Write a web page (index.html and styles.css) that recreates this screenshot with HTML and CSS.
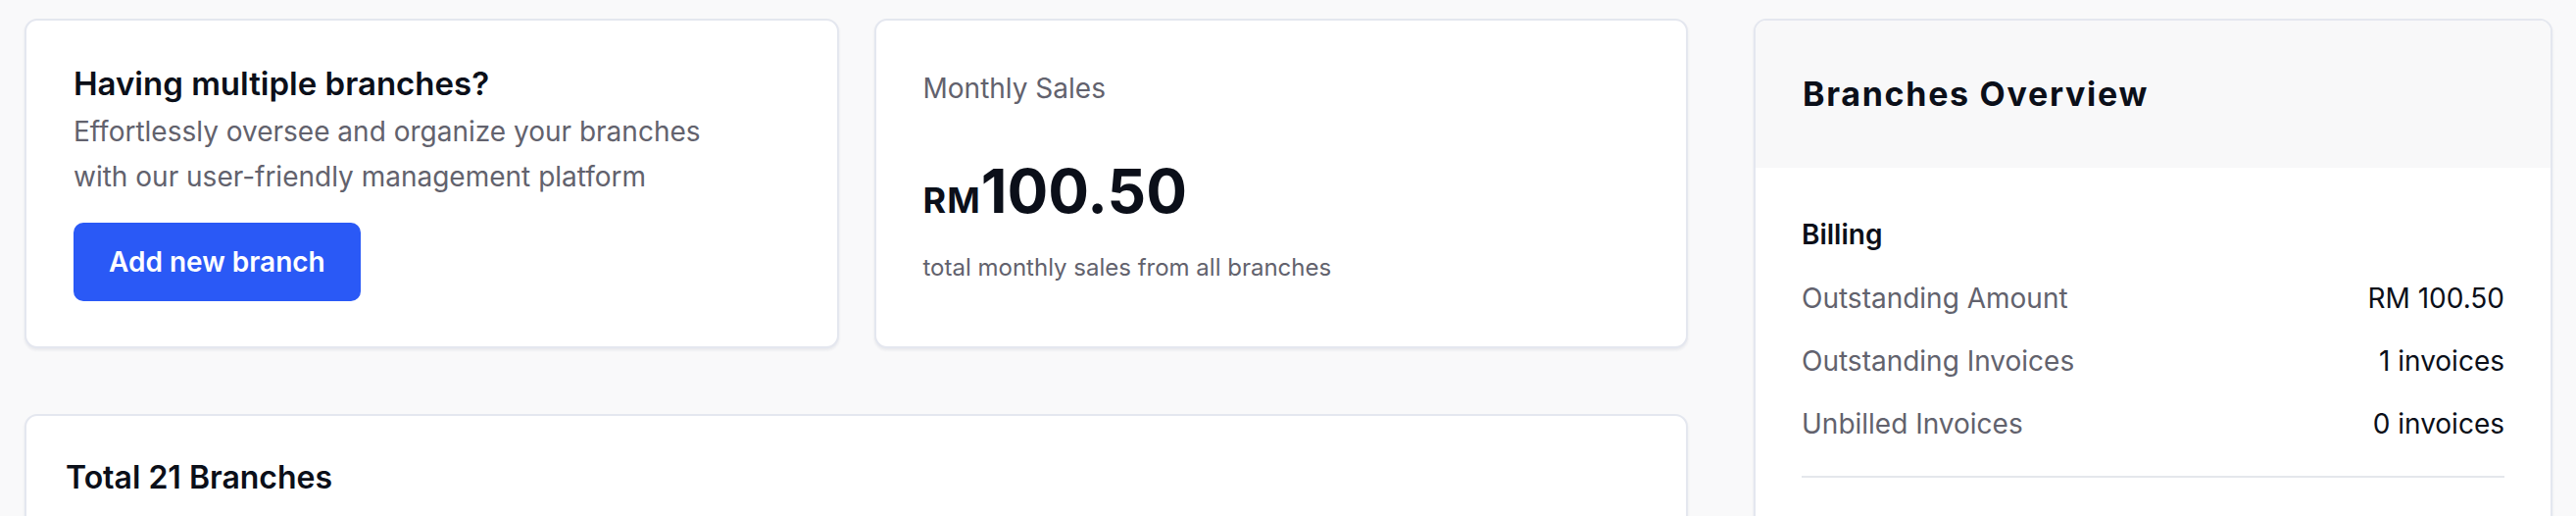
FILE: index.html
```html
<!DOCTYPE html>
<html lang="en">
<head>
    <meta charset="UTF-8">
    <meta name="viewport" content="width=device-width, initial-scale=1.0">
    <title>Branches</title>
    <link rel="stylesheet" href="styles.css">
</head>
<body>
    <div class="layout">
        <div class="main-col">
            <div class="top-cards">
                <!-- Promo card -->
                <div class="card promo">
                    <h2 class="promo-title">Having multiple branches?</h2>
                    <p class="promo-text">
                        Effortlessly oversee and organize your branches<br>
                        with our user-friendly management platform
                    </p>
                    <button type="button" class="btn-primary">Add new branch</button>
                </div>

                <!-- Sales card -->
                <div class="card sales">
                    <div class="sales-label">Monthly Sales</div>
                    <div class="sales-amount"><span class="currency">RM</span>100.50</div>
                    <div class="sales-note">total monthly sales from all branches</div>
                </div>
            </div>

            <div class="card branches">
                <h3 class="branches-title">Total 21 Branches</h3>
            </div>
        </div>

        <div class="card overview">
            <div class="overview-header">
                <h2>Branches Overview</h2>
            </div>
            <div class="overview-body">
                <h4 class="section-title">Billing</h4>
                <div class="stat-list">
                    <div class="stat-row">
                        <span class="stat-label">Outstanding Amount</span>
                        <span class="stat-value">RM 100.50</span>
                    </div>
                    <div class="stat-row">
                        <span class="stat-label">Outstanding Invoices</span>
                        <span class="stat-value">1 invoices</span>
                    </div>
                    <div class="stat-row">
                        <span class="stat-label">Unbilled Invoices</span>
                        <span class="stat-value">0 invoices</span>
                    </div>
                </div>
                <div class="divider"></div>
            </div>
        </div>
    </div>
</body>
</html>
```

FILE: styles.css
```css
body {
    margin: 0;
    padding: 19px 24px 0 25px;
    background-color: #f9f9fa;
    font-family: Inter, "Noto Sans", sans-serif;
    color: #0b0f19;
}
h2, h3, h4, p {
    margin: 0;
}
.layout {
    display: grid;
    grid-template-columns: 1fr 815px;
    gap: 67px;
    align-items: start;
}
.top-cards {
    display: grid;
    grid-template-columns: 1fr 1fr;
    gap: 36px;
}
.card {
    background-color: #fff;
    border: 2px solid #e4e7ef;
    border-radius: 13px;
    box-shadow: 0 2px 3px rgba(30, 40, 80, 0.08);
    box-sizing: border-box;
}
.promo {
    padding: 46px 48px;
}
.promo-title {
    font-size: 33px;
    line-height: 36px;
    font-weight: 600;
}
.promo-text {
    margin-top: 8px;
    font-size: 28px;
    line-height: 46px;
    color: #62626d;
}
.btn-primary {
    margin-top: 24px;
    height: 80px;
    padding: 0 36px;
    border: none;
    border-radius: 10px;
    background-color: #2a59f6;
    color: #fff;
    font-family: inherit;
    font-size: 28px;
    font-weight: 600;
    cursor: pointer;
}
.sales {
    padding: 46px 48px;
}
.sales-label {
    font-size: 28px;
    line-height: 46px;
    color: #62626d;
}
.sales-amount {
    margin-top: 51px;
    font-size: 62px;
    line-height: 62px;
    font-weight: 700;
}
.currency {
    font-size: 36px;
    letter-spacing: 1px;
}
.sales-note {
    margin-top: 21px;
    font-size: 24px;
    line-height: 33px;
    color: #62626d;
}
.branches {
    margin-top: 67px;
    height: 300px;
    padding: 40px;
}
.branches-title {
    font-size: 32px;
    line-height: 46px;
    font-weight: 600;
}
.overview {
    overflow: hidden;
    min-height: 700px;
}
.overview-header {
    background-color: #f8f8f9;
    padding: 49px 48px;
}
.overview-header h2 {
    font-size: 34px;
    line-height: 52px;
    font-weight: 700;
    letter-spacing: 1.7px;
}
.overview-body {
    padding: 48px 47px;
}
.section-title {
    font-size: 28px;
    line-height: 40px;
    font-weight: 600;
}
.stat-list {
    margin-top: 25px;
    display: flex;
    flex-direction: column;
    gap: 24px;
}
.stat-row {
    display: flex;
    justify-content: space-between;
    font-size: 28px;
    line-height: 40px;
}
.stat-label {
    color: #62626d;
}
.divider {
    margin-top: 33px;
    border-top: 2px solid #e4e7ec;
}
```
